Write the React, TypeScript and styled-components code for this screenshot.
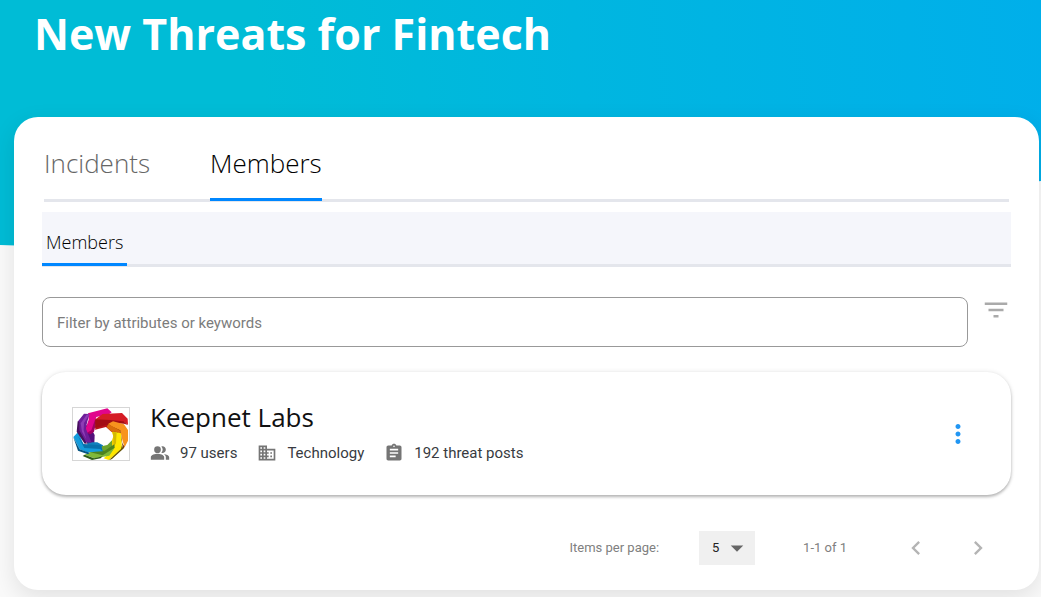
import React from 'react';
import styled, { createGlobalStyle } from 'styled-components';
import {
  MdPeopleAlt,
  MdBusiness,
  MdAssignment,
  MdFilterList,
  MdMoreVert,
  MdChevronLeft,
  MdChevronRight,
  MdArrowDropDown,
} from 'react-icons/md';

const GlobalStyle = createGlobalStyle`
  * { box-sizing: border-box; }
  body {
    margin: 0;
    background: #fafafa;
    font-family: Roboto, "Liberation Sans", sans-serif;
    color: #383b41;
  }
  button, input, select { font: inherit; color: inherit; }
  button { border: 0; padding: 0; background: none; cursor: pointer; }
`;

const Page = styled.div`
  position: relative;
  isolation: isolate;
  min-height: 100vh;
  overflow: hidden;
  padding: 0 2px 7px 14px;
`;

const Banner = styled.div`
  position: absolute;
  z-index: -1;
  top: 0;
  left: 0;
  right: 0;
  height: 246px;
  background: linear-gradient(84deg, #00bcd6 26%, #00b6e0 56%, #00afea 100%);
  clip-path: polygon(0 0, 100% 0, 100% 181px, 50% 240px, 3% 100%, 0 245px);
`;

const Title = styled.h1`
  margin: 0;
  height: 117px;
  padding-left: 20px;
  font: 700 43px/68px "Open Sans", sans-serif;
  color: #fff;
`;

const Card = styled.main`
  padding: 24px 28px 25px;
  border-radius: 24px;
  background: #fff;
  box-shadow: 0 8px 24px rgba(0, 0, 0, 0.1);
`;

const Tabs = styled.nav`
  display: flex;
  gap: 60px;
  margin: 0 2px 10px;
  border-bottom: 3px solid #e4e6ec;
`;

const Tab = styled.button<{ $active?: boolean }>`
  height: 60px;
  margin-bottom: -2px;
  padding-bottom: 13px;
  border-bottom: 3px solid ${(p) => (p.$active ? '#0087ff' : 'transparent')};
  font: 300 26px/36px "Open Sans", sans-serif;
  color: ${(p) => (p.$active ? '#000' : '#666')};
`;

const SubTabs = styled.nav`
  display: flex;
  margin-bottom: 30px;
  border-bottom: 3px solid #e4e6ec;
  background: #f5f6fb;
`;

const SubTab = styled.button`
  height: 54px;
  margin-bottom: -2px;
  padding: 8px 4px 0;
  border-bottom: 3px solid #0087ff;
  font: 300 18px/24px "Open Sans", sans-serif;
  color: #000;
`;

const FilterRow = styled.form`
  display: flex;
  align-items: flex-start;
  gap: 13px;
  margin-bottom: 25px;
`;

const FilterInput = styled.input`
  flex: 1;
  min-width: 0;
  height: 50px;
  padding: 2px 14px 0;
  border: 1px solid #999;
  border-radius: 8px;
  background: #fff;
  font-size: 15px;
  &::placeholder { color: #7c7c7c; opacity: 1; }
`;

const IconButton = styled.button<{ $color: string }>`
  display: flex;
  align-items: center;
  justify-content: center;
  color: ${(p) => p.$color};
`;

const FilterButton = styled(IconButton)`
  height: 26px;
  width: 30px;
`;

const Member = styled.article`
  display: flex;
  align-items: center;
  gap: 20px;
  min-height: 123px;
  margin-bottom: 36px;
  padding: 0 38px 0 30px;
  border-radius: 24px;
  box-shadow: 0 2px 3px rgba(0, 0, 0, 0.26), 0 0 5px rgba(0, 0, 0, 0.1);
`;

const LogoFrame = styled.div`
  display: flex;
  width: 58px;
  height: 54px;
  border: 1px solid #d6d6d6;
`;

const MemberInfo = styled.div`
  flex: 1;
`;

const MemberName = styled.h2`
  margin: 0;
  font: 500 26px/36px "Open Sans", sans-serif;
  color: #111;
`;

const Facts = styled.ul`
  display: flex;
  gap: 20px;
  margin: 0;
  padding: 2px 0 0;
  list-style: none;
`;

const Fact = styled.li`
  display: flex;
  align-items: center;
  gap: 10px;
  font-size: 15px;
  line-height: 32px;
  svg { color: #757575; }
`;

const Pagination = styled.footer`
  display: flex;
  align-items: center;
  justify-content: flex-end;
  padding-right: 19px;
  font-size: 13px;
  line-height: 16px;
  color: #808080;
`;

const SelectBox = styled.div`
  position: relative;
  margin: 0 48px 0 40px;
  color: #666;
  svg {
    position: absolute;
    top: 2px;
    right: 3px;
    pointer-events: none;
  }
`;

const SizeSelect = styled.select`
  display: block;
  width: 56px;
  height: 34px;
  padding: 0 13px;
  border: 0;
  border-radius: 0;
  background: #f0f0f0;
  appearance: none;
  color: #222;
`;

const Pager = styled.div`
  display: flex;
  gap: 34px;
  margin-left: 55px;
`;

function KeepnetLogo() {
  return (
    <svg width="56" height="52" viewBox="9 9 168 156" role="img" aria-label="Keepnet Labs logo">
      <path d="M42 54 66 76 74 90 73 116 50 115z" fill="#54107c" />
      <path d="M52 112 82 112 99 121 98 138 52 140z" fill="#1180bd" />
      <path d="M94 124 112 120 126 106 135 126 104 150 80 142z" fill="#6da32d" />
      <path d="M122 72 152 80 152 126 126 144 126 106 130 94z" fill="#f2cf00" />
      <path d="M80 52 128 46 150 76 124 80 108 66 75 74z" fill="#b81219" />
      <path d="M54 25 112 10 125 22 118 27 79 36 75 50 66 77 50 86 47 70 56 44z" fill="#e1058c" />
      <path d="M75 44 118 28 127 27 80 47 72 80 62 88 50 84 64 76z" fill="#a10063" />
      <path d="M77 42 98 27 156 24 173 41 174 59 161 51 133 48 92 62 77 54z" fill="#d51c26" />
      <path d="M76 43 121 45 160 49 174 60 162 56 127 55 89 65 75 69z" fill="#a30d14" />
      <path d="M115 56 129 49 162 58 174 75 174 107 164 127 158 109 151 79 136 75z" fill="#f7931e" />
      <path d="M111 58 151 76 157 115 164 125 160 132 149 88 120 73z" fill="#7d3b0b" />
      <path d="M115 57 151 77 151 92 142 82 122 78 110 66z" fill="#d96f0b" />
      <path d="M134 81 153 85 156 131 116 165 101 160 127 137 134 108z" fill="#ffe600" />
      <path d="M129 82 140 81 138 115 120 143 131 117z" fill="#d5b900" />
      <path d="M156 121 160 131 126 162 116 166 153 132z" fill="#635000" />
      <path d="M61 141 96 143 125 125 134 128 118 152 73 160 44 149z" fill="#80b938" />
      <path d="M61 142 79 137 104 137 133 118 134 128 98 151z" fill="#4d831f" />
      <path d="M44 149 72 160 98 154 92 160 66 165 38 153z" fill="#315e18" />
      <path d="M10 96 25 80 41 119 94 123 98 139 52 142 29 133z" fill="#149bdc" />
      <path d="M24 94 41 117 94 121 98 140 91 132 43 129z" fill="#0871ac" />
      <path d="M10 97 29 133 59 143 54 148 24 137z" fill="#075582" />
      <path d="M24 49 42 26 58 27 47 70 65 113 44 111 24 76z" fill="#6e1d99" />
      <path d="M23 49 28 51 28 76 49 113 65 113 44 116 20 80z" fill="#47105f" />
      <path d="M59 27 50 29 32 55 36 80 49 103 41 75 42 54z" fill="#8e3db5" />
    </svg>
  );
}

export default function App() {
  return (
    <>
      <GlobalStyle />
      <Page>
        <Banner />
        <Title>New Threats for Fintech</Title>
        <Card>
          <Tabs aria-label="Sections">
            <Tab>Incidents</Tab>
            <Tab $active>Members</Tab>
          </Tabs>
          <SubTabs aria-label="Member views">
            <SubTab>Members</SubTab>
          </SubTabs>
          <FilterRow onSubmit={(e) => e.preventDefault()}>
            <FilterInput aria-label="Filter members" placeholder="Filter by attributes or keywords" />
            <FilterButton type="button" $color="#aaa" aria-label="Filters">
              <MdFilterList size={30} />
            </FilterButton>
          </FilterRow>
          <Member>
            <LogoFrame><KeepnetLogo /></LogoFrame>
            <MemberInfo>
              <MemberName>Keepnet Labs</MemberName>
              <Facts>
                <Fact><MdPeopleAlt size={20} />97 users</Fact>
                <Fact><MdBusiness size={20} />Technology</Fact>
                <Fact><MdAssignment size={20} />192 threat posts</Fact>
              </Facts>
            </MemberInfo>
            <IconButton $color="#2196f3" aria-label="More actions">
              <MdMoreVert size={30} />
            </IconButton>
          </Member>
          <Pagination>
            <label htmlFor="page-size">Items per page:</label>
            <SelectBox>
              <SizeSelect id="page-size" defaultValue="5">
                <option>5</option>
                <option>10</option>
                <option>25</option>
              </SizeSelect>
              <MdArrowDropDown size={30} />
            </SelectBox>
            <span>1-1 of 1</span>
            <Pager>
              <IconButton $color="#b4b4b4" aria-label="Previous page"><MdChevronLeft size={28} /></IconButton>
              <IconButton $color="#b4b4b4" aria-label="Next page"><MdChevronRight size={28} /></IconButton>
            </Pager>
          </Pagination>
        </Card>
      </Page>
    </>
  );
}
